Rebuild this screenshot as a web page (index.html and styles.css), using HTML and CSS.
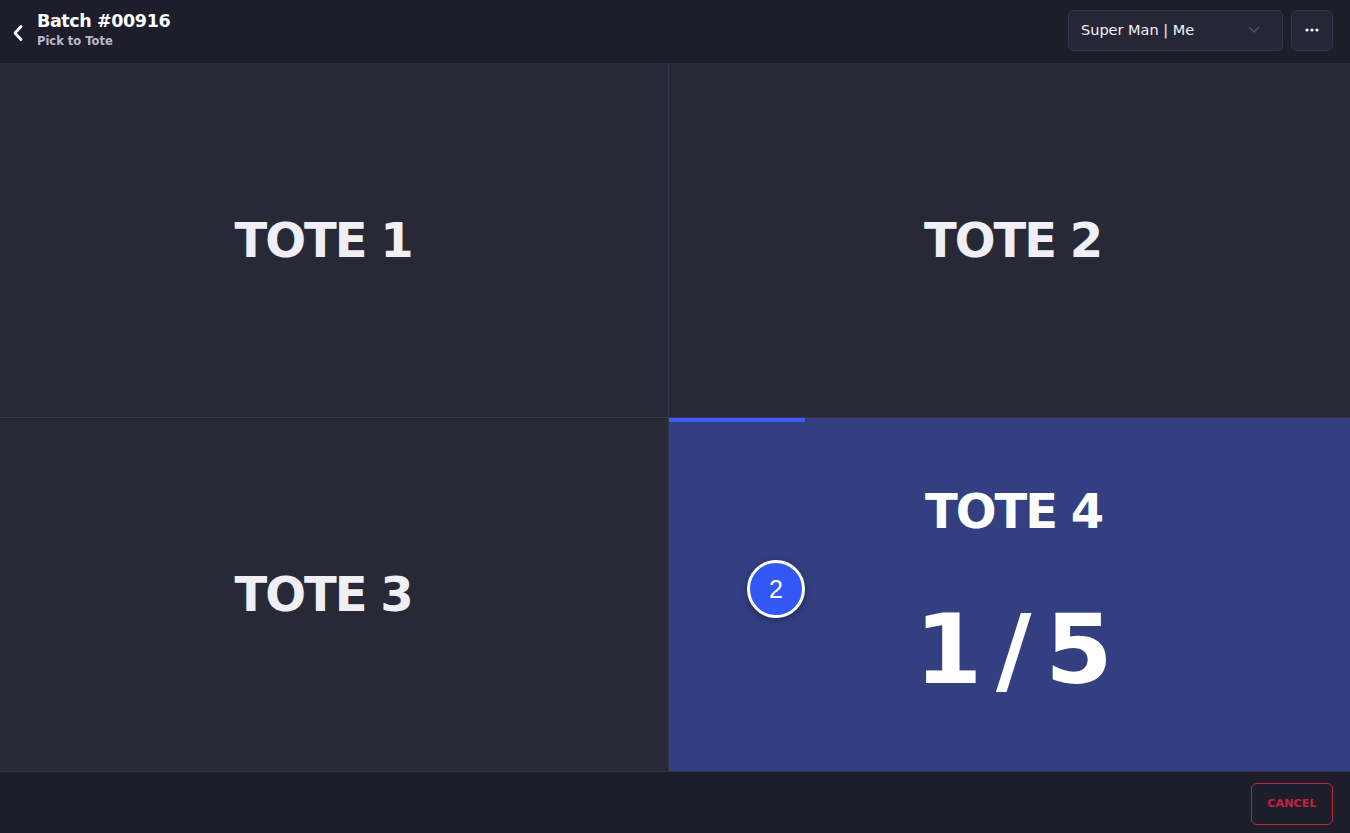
FILE: index.html
```html
<!DOCTYPE html>
<html>
<head>
<meta charset="utf-8">
<link rel="stylesheet" href="styles.css">
</head>
<body>
<div class="app">
  <header class="topbar">
    <div class="title-group">
      <button class="back" aria-label="Back">
        <svg width="14" height="18" viewBox="0 0 14 18"><path d="M10 2.5 L4 9 L10 15.5" fill="none" stroke="#ffffff" stroke-width="2.8" stroke-linecap="round" stroke-linejoin="round"/></svg>
      </button>
      <div class="titles">
        <div class="title">Batch #00916</div>
        <div class="subtitle">Pick to Tote</div>
      </div>
    </div>
    <div class="actions">
      <div class="select">
        <span>Super Man | Me</span>
        <svg width="12" height="8" viewBox="0 0 12 8"><path d="M1.5 1.5 L6 6 L10.5 1.5" fill="none" stroke="#4a4c62" stroke-width="1.5" stroke-linecap="round" stroke-linejoin="round"/></svg>
      </div>
      <button class="more" aria-label="More">
        <svg width="14" height="4" viewBox="0 0 14 4"><circle cx="2" cy="2" r="1.6" fill="#fff"/><circle cx="7" cy="2" r="1.6" fill="#fff"/><circle cx="12" cy="2" r="1.6" fill="#fff"/></svg>
      </button>
    </div>
  </header>
  <main class="grid">
    <div class="cell left"><div class="tote">TOTE 1</div></div>
    <div class="cell right"><div class="tote">TOTE 2</div></div>
    <div class="cell left"><div class="tote">TOTE 3</div></div>
    <div class="cell right active">
      <div class="progress" style="width: 20%"></div>
      <div class="tote">TOTE 4</div>
      <div class="count">1 / 5</div>
      <div class="badge">2</div>
    </div>
  </main>
  <footer class="footer">
    <button class="cancel">CANCEL</button>
  </footer>
</div>
</body>
</html>
```
FILE: styles.css
```css
* { box-sizing: border-box; }
html, body { margin: 0; padding: 0; }
body {
  background: #1e1e2b;
  font-family: "DejaVu Sans", "Noto Sans", sans-serif;
  color: #fff;
  width: 1350px;
  height: 833px;
  overflow: hidden;
}
.app {
  display: flex;
  flex-direction: column;
  height: 833px;
}
.topbar {
  height: 64px;
  flex: none;
  display: flex;
  align-items: center;
  justify-content: space-between;
  padding: 0 17px 0 4px;
  background: #1e1e2b;
  border-bottom: 1px solid #2e3043;
}
.title-group { display: flex; align-items: center; gap: 6px; margin-top: -4px; }
.back {
  background: none; border: 0; padding: 0; width: 27px; height: 24px;
  display: flex; align-items: center; justify-content: center; cursor: pointer;
  margin-top: 6px;
}
.titles { display: flex; flex-direction: column; }
.title { font-size: 17.5px; font-weight: 700; line-height: 22px; letter-spacing: -0.4px; margin-top: -1px; }
.subtitle { font-size: 11.5px; font-weight: 700; color: #b9bad0; line-height: 16px; margin-top: 1px; }
.actions { display: flex; gap: 8px; align-items: center; margin-top: -3px; }
.select {
  width: 215px; height: 41px;
  display: flex; align-items: center; justify-content: space-between;
  padding: 0 22px 0 12px;
  background: #252736;
  border: 1px solid #343649;
  border-radius: 6px;
  font-size: 14.5px;
  font-weight: 500;
  color: #f2f2f6;
}
.more {
  width: 42px; height: 41px;
  background: #252736;
  border: 1px solid #343649;
  border-radius: 6px;
  display: flex; align-items: center; justify-content: center;
  padding: 0;
}
.grid {
  flex: 1;
  display: grid;
  grid-template-columns: 668px 1fr;
  grid-template-rows: 353px 1fr;
  gap: 1px;
  background: #34364a;
  border-bottom: 1px solid #2e3043;
}
.cell {
  background: #272937;
  display: flex;
  flex-direction: column;
  align-items: center;
  justify-content: center;
  position: relative;
}
.cell.left { padding-right: 22px; }
.cell.right { padding-left: 6px; }
.tote {
  font-size: 48px;
  font-weight: 700;
  color: #efeff5;
  letter-spacing: -2px;
  margin-top: -2px;
}
.cell.active { background: #333f80; }
.cell.active .tote { color: #fff; margin-top: 0; margin-left: 2px; }
.count {
  font-size: 97px;
  font-weight: 700;
  line-height: 1;
  letter-spacing: -0.5px;
  word-spacing: -19px;
  margin-top: 62px;
  margin-left: 2px;
  margin-bottom: 8px;
}
.progress {
  position: absolute; left: 0; top: 0;
  height: 4px;
  background: #3a5cf7;
}
.badge {
  position: absolute;
  left: 78px; top: 142px;
  width: 58px; height: 58px;
  border-radius: 50%;
  background: #3458f6;
  border: 3px solid #fff;
  box-shadow: 0 2px 6px rgba(0,0,0,0.35);
  display: flex; align-items: center; justify-content: center;
  font-family: "Liberation Sans", Arial, sans-serif;
  font-size: 25px;
  color: #fff;
}
.footer {
  height: 61px;
  flex: none;
  display: flex;
  align-items: center;
  justify-content: flex-end;
  padding: 0 17px;
  background: #1e1e2b;
}
.cancel {
  width: 82px; height: 42px;
  background: transparent;
  border: 1.5px solid #b8223f;
  border-radius: 6px;
  color: #c8203f;
  font-family: "DejaVu Sans", sans-serif;
  font-size: 11px;
  font-weight: 700;
  letter-spacing: 0.2px;
  margin-top: 2px;
}
```
